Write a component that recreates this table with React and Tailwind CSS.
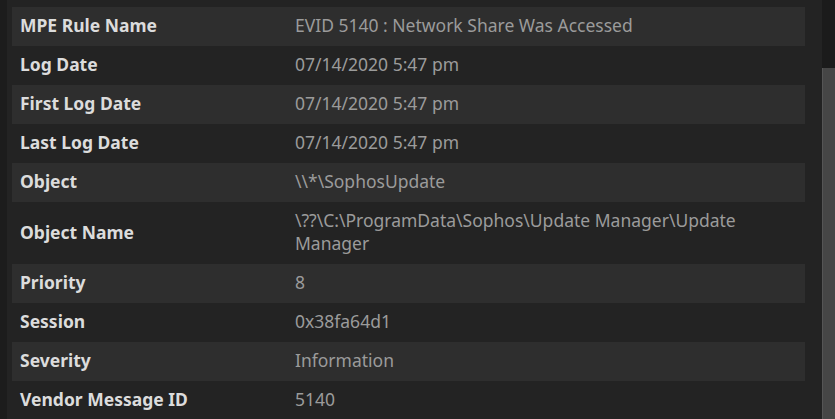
import React from "react";

const rows = [
    ["MPE Rule Name", "EVID 5140 : Network Share Was Accessed"],
    ["Log Date", "07/14/2020 5:47 pm"],
    ["First Log Date", "07/14/2020 5:47 pm"],
    ["Last Log Date", "07/14/2020 5:47 pm"],
    ["Object", "\\\\*\\SophosUpdate"],
    ["Object Name", "\\??\\C:\\ProgramData\\Sophos\\Update Manager\\Update Manager"],
    ["Priority", "8"],
    ["Session", "0x38fa64d1"],
    ["Severity", "Information"],
    ["Vendor Message ID", "5140"],
];

export default function App() {
    return (
        <div className="flex h-[419px] w-[835px] overflow-hidden bg-[#232323] font-['Noto_Sans',sans-serif]">
            <div className="w-[7px] shrink-0 bg-[#1c1c1c]"></div>
            <div className="flex-1 pl-[5px] pt-[7px]">
                <div className="w-[793px]">
                    {rows.map(([label, value], i) => (
                        <div key={label} className={`flex items-center pt-[7px] pb-[9px] text-[17.5px] leading-[23px] ${i % 2 === 0 ? "bg-[#2e2e2e]" : ""}`}>
                            <div className="w-[283px] shrink-0 pl-2 font-bold text-[#dcdcdc]">{label}</div>
                            <div className="flex-1 pr-2 text-[#9b9b9b]">{value}</div>
                        </div>
                    ))}
                </div>
            </div>
            <div className="flex w-[13px] shrink-0 flex-col bg-[#1b1b1b]">
                <div className="h-[68px]"></div>
                <div className="flex-1 border-l border-[#555] bg-[#464646]"></div>
            </div>
        </div>
    );
}
